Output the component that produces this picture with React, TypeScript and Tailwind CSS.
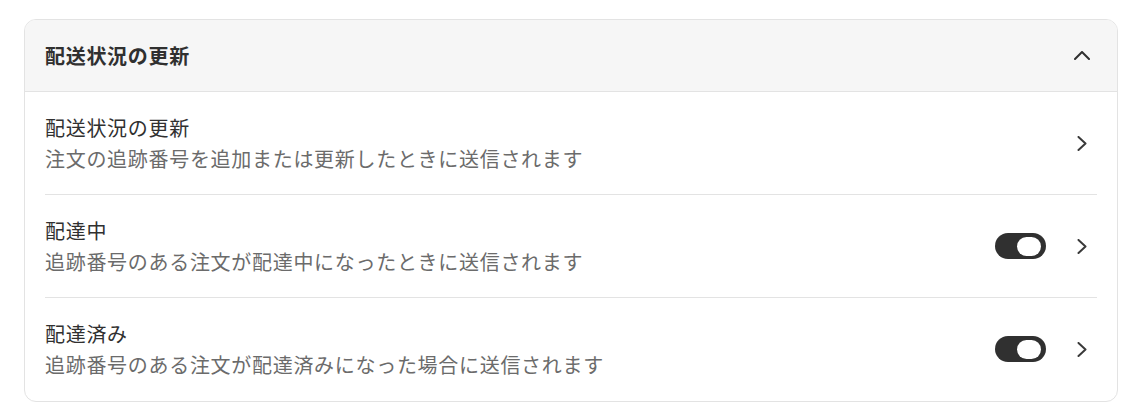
import React from 'react';

const rows = [
  {
    title: '配送状況の更新',
    description: '注文の追跡番号を追加または更新したときに送信されます',
    toggle: false,
  },
  {
    title: '配達中',
    description: '追跡番号のある注文が配達中になったときに送信されます',
    toggle: true,
  },
  {
    title: '配達済み',
    description: '追跡番号のある注文が配達済みになった場合に送信されます',
    toggle: true,
  },
];

const ChevronRight = () => (
  <svg width="10" height="15" viewBox="0 0 10 15" fill="none" className="shrink-0">
    <path d="M1.5 1 L8.5 7.5 L1.5 14" stroke="#3a3a3a" strokeWidth="2" strokeLinecap="round" strokeLinejoin="round" />
  </svg>
);

const ChevronUp = () => (
  <svg width="16" height="9" viewBox="0 0 16 9" fill="none" className="shrink-0">
    <path d="M1 8 L8 1 L15 8" stroke="#303030" strokeWidth="2" strokeLinecap="round" strokeLinejoin="round" />
  </svg>
);

const Toggle = () => (
  <div className="flex h-[26px] w-[51px] items-center justify-end rounded-full bg-[#303030] pr-[5px]">
    <div className="h-[19px] w-[24px] rounded-full bg-white" />
  </div>
);

export default function App() {
  return (
    <div
      className="min-h-screen bg-white pl-[24px] pt-[19px] text-[#303030]"
      style={{ fontFamily: '"Noto Sans CJK JP", "Noto Sans", sans-serif' }}
    >
      <div className="w-[1094px] overflow-hidden rounded-[12px] border border-[#e3e3e3] bg-white">
        {/* Header */}
        <div className="flex h-[72px] items-center justify-between border-b border-[#e3e3e3] bg-[#f6f6f6] pl-[20px] pr-[27px]">
          <h2 className="text-[20px] font-bold tracking-[0.7px]">配送状況の更新</h2>
          <ChevronUp />
        </div>

        {/* Rows */}
        <div className="px-[20px]">
          {rows.map((row, i) => (
            <div
              key={row.title}
              className={`flex items-center justify-between pt-[20px] ${
                i < rows.length - 1 ? 'border-b border-[#e3e3e3] pb-[20px]' : 'pb-[21px]'
              }`}
            >
              <div className="flex flex-col">
                <span className="text-[20px] leading-[31px] tracking-[0.7px]">{row.title}</span>
                <span className="text-[20px] leading-[31px] tracking-[0.7px] text-[#6b6b6b]">
                  {row.description}
                </span>
              </div>
              <div className="flex items-center gap-[31px] pr-[10px]">
                {row.toggle && <Toggle />}
                <ChevronRight />
              </div>
            </div>
          ))}
        </div>
      </div>
    </div>
  );
}
